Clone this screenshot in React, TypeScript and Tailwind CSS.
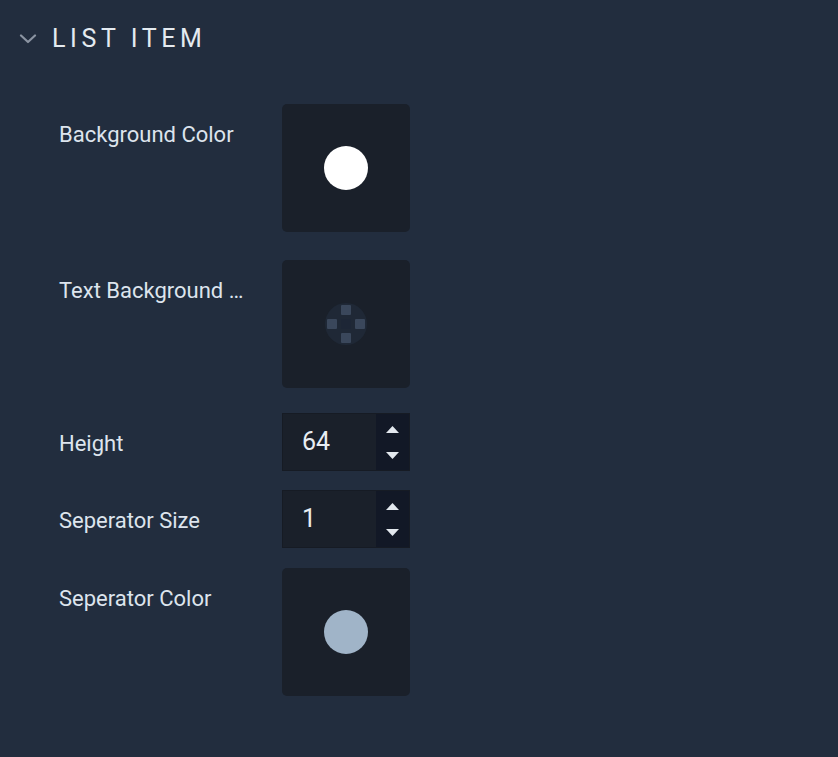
import type { ReactNode } from "react";

const font = { fontFamily: "Roboto, 'Noto Sans', sans-serif" };

function Chevron() {
  return (
    <svg width="18" height="10" viewBox="0 0 18 10" fill="none">
      <path d="M2 1.5 L9 8 L16 1.5" stroke="#8b94a2" strokeWidth="2.2" strokeLinecap="round" strokeLinejoin="round" />
    </svg>
  );
}

function Swatch({ color }: { color: string }) {
  return (
    <div className="w-[128px] h-[128px] rounded-[5px] bg-[#1a202a] flex items-center justify-center">
      <div className="w-[44px] h-[44px] rounded-full" style={{ background: color }} />
    </div>
  );
}

function TransparentSwatch() {
  return (
    <div className="w-[128px] h-[128px] rounded-[5px] bg-[#1a202a] flex items-center justify-center">
      <svg width="44" height="44" viewBox="0 0 44 44">
        <defs>
          <clipPath id="c">
            <circle cx="22" cy="22" r="21" />
          </clipPath>
        </defs>
        <g clipPath="url(#c)">
          <rect x="0" y="0" width="44" height="44" fill="#1f2836" />
          <rect x="17" y="3" width="10" height="10" rx="1" fill="#3a475b" />
          <rect x="3" y="17" width="10" height="10" rx="1" fill="#3a475b" />
          <rect x="31" y="17" width="10" height="10" rx="1" fill="#3a475b" />
          <rect x="17" y="31" width="10" height="10" rx="1" fill="#3a475b" />
          <rect x="17" y="17" width="10" height="10" fill="#1d2636" />
        </g>
      </svg>
    </div>
  );
}

function NumberInput({ value }: { value: string }) {
  return (
    <div className="w-[128px] h-[58px] flex bg-[#1a202a] border border-[#161b24]">
      <div className="flex-1 flex items-center pl-[19px] text-[25px] text-[#e8edf2]">{value}</div>
      <div className="w-[33px] bg-[#121826] flex flex-col items-center justify-between pt-[12px] pb-[11px]">
        <svg width="13" height="7" viewBox="0 0 13 7">
          <path d="M0 7 L6.5 0 L13 7 Z" fill="#e3e8ee" />
        </svg>
        <svg width="13" height="7" viewBox="0 0 13 7">
          <path d="M0 0 L6.5 7 L13 0 Z" fill="#e3e8ee" />
        </svg>
      </div>
    </div>
  );
}

function Row({ label, children, className }: { label: string; children: ReactNode; className?: string }) {
  return (
    <div className={"flex items-start " + (className ?? "")}>
      <div className="w-[282px] h-[59px] flex items-center pt-[2px] pl-[59px] pr-3 text-[22px] text-[#dde4ed] whitespace-nowrap overflow-hidden">
        {label}
      </div>
      {children}
    </div>
  );
}

export default function App() {
  return (
    <div className="min-h-screen bg-[#222d3e] select-none" style={font}>
      <div className="flex items-center h-[78px] pl-[19px]">
        <Chevron />
        <span className="ml-[15px] text-[25px] tracking-[4.6px] text-[#e4eaf0]">LIST ITEM</span>
      </div>
      <div className="pt-[26px]">
        <Row label="Background Color" className="mb-[28px]">
          <Swatch color="#ffffff" />
        </Row>
        <Row label="Text Background …" className="mb-[25px]">
          <TransparentSwatch />
        </Row>
        <Row label="Height" className="mb-[18px]">
          <NumberInput value="64" />
        </Row>
        <Row label="Seperator Size" className="mb-[19px]">
          <NumberInput value="1" />
        </Row>
        <Row label="Seperator Color">
          <Swatch color="#a0b4c8" />
        </Row>
      </div>
    </div>
  );
}
